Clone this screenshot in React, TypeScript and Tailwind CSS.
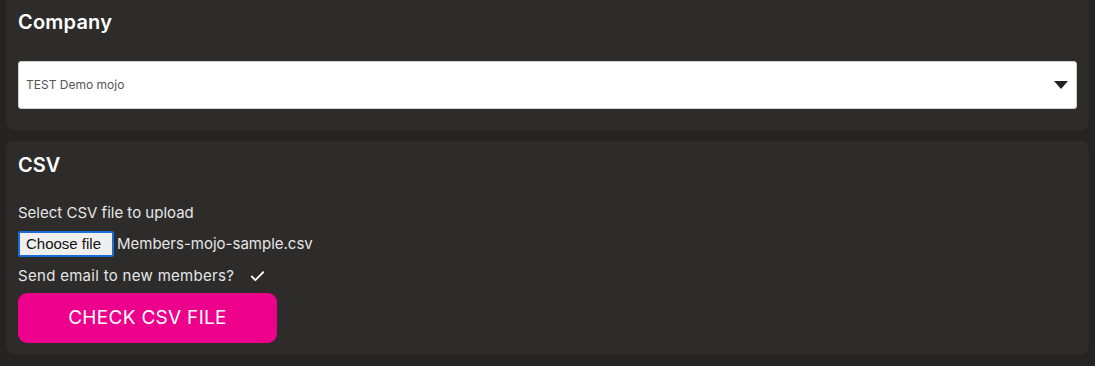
import { Check } from "lucide-react";

const FONT = "font-['Inter','Noto_Sans',sans-serif]";

export default function App() {
  return (
    <div className={`w-[1095px] h-[366px] bg-[#252423] px-[6px] flex flex-col gap-[11px] overflow-hidden ${FONT}`}>
      {/* Company panel (top clipped) */}
      <div className="bg-[#2d2c2b] rounded-b-[8px] -mt-[8px] pt-[16px] pb-[21px] px-[12px]">
        <h2 className="text-[20px] font-semibold text-white leading-[28px] tracking-[0.2px]">Company</h2>
        <div className="mt-[25px] h-[48px] bg-white rounded-[3px] border border-[#d0d0d0] flex items-center justify-between pl-[7px] pr-[8px]">
          <span className="text-[12px] text-[#555]">TEST Demo mojo</span>
          <svg width="14" height="8" viewBox="0 0 14 8">
            <path d="M0 0 L14 0 L7 8 Z" fill="#222" />
          </svg>
        </div>
      </div>

      {/* CSV panel */}
      <div className="bg-[#2d2c2b] rounded-[8px] pt-[10px] pb-[11px] px-[12px]">
        <h2 className="text-[20px] font-semibold text-white leading-[28px]">CSV</h2>
        <p className="mt-[24px] text-[15px] text-[#e6e6e6] leading-[20px]">Select CSV file to upload</p>
        <div className="mt-[8px] flex items-center">
          <span className="w-[96px] h-[26px] flex items-center pl-[6px] bg-[#efefef] border-2 border-[#1a6fd6] rounded-[2px] text-[15px] text-[#111] font-['Liberation_Sans',Arial,sans-serif]">
            Choose file
          </span>
          <span className="ml-[3px] text-[15px] text-[#e6e6e6]">Members-mojo-sample.csv</span>
        </div>
        <div className="mt-[9px] flex items-center">
          <span className="text-[15px] text-[#e6e6e6] leading-[20px] tracking-[0.3px]">Send email to new members?</span>
          <Check size={17} strokeWidth={2.5} className="ml-[15px] text-white" />
        </div>
        <button className="mt-[7px] w-[259px] h-[50px] bg-[#ec008c] rounded-[9px] text-[19px] text-white tracking-[0.3px]">
          CHECK CSV FILE
        </button>
      </div>
    </div>
  );
}
